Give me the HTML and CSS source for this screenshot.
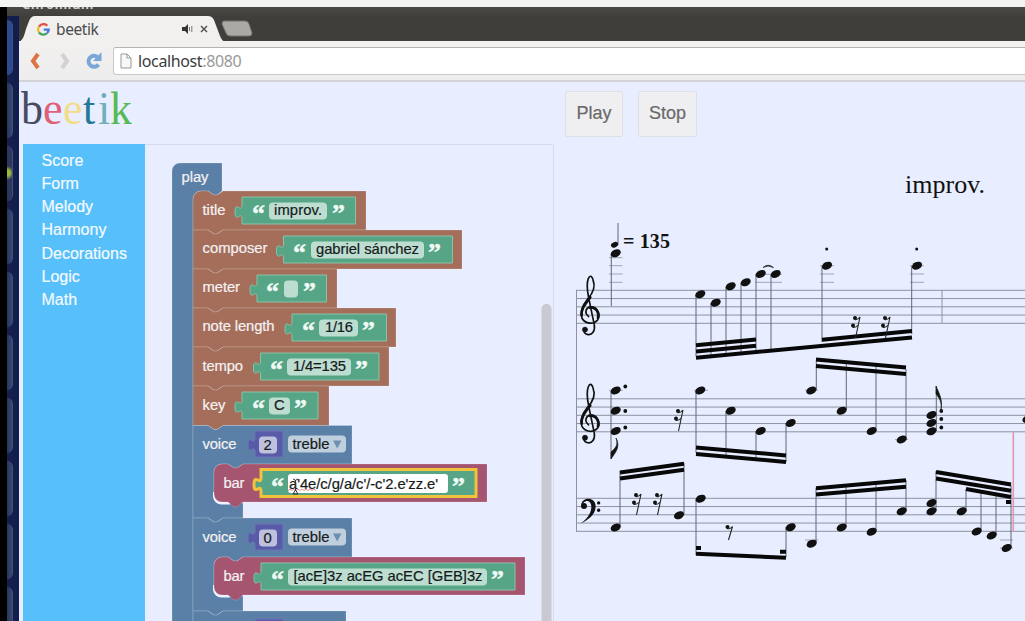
FILE: index.html
```html
<!DOCTYPE html>
<html lang="en">
<head>
<meta charset="utf-8">
<title>beetik</title>
<link rel="stylesheet" href="styles.css">
</head>
<body>
<div class="desktop">
  <div class="top-edge"></div>
  <div class="screen">
    <div class="bezel"></div>
    <div class="main">
      <div class="titlebar"><span class="window-title">Chromium</span></div>
      <div class="columns">
        <div class="launcher">
          <i class="tile first"></i><i class="tile"></i><i class="tile green"></i><i class="tile"></i><i class="tile"></i><i class="tile"></i><i class="tile"></i><i class="tile"></i><i class="tile"></i><i class="tile"></i>
        </div>
        <div class="browser">
          <div class="tabs">
            <div class="tab">
              <svg class="tab-shape" viewBox="0 0 206 26"><path d="M0 26C4 24 5 20 7 13L10 5Q12 0 16 0H189Q193 0 195 4L201 20Q203 25 206 26Z"/></svg>
              <svg class="google" viewBox="0 0 13 13"><g fill="none" stroke-width="2.3"><path stroke="#e25040" d="M2 3.7A5.2 5.2 0 0 1 10.3 2.8"/><path stroke="#f0bd35" d="M2 9.3A5.2 5.2 0 0 1 2 3.7"/><path stroke="#3fa45c" d="M10 10.2A5.2 5.2 0 0 1 2 9.3"/><path stroke="#4777dd" d="M6.7 6.6H11.7Q11.6 9 10 10.2"/></g></svg>
              <span class="tab-name">beetik</span>
              <svg class="speaker" viewBox="0 0 12 10"><path fill="#333" d="M0 3H3L6 0V10L3 7H0Z"/><path d="M7.5 3v4M9.8 2v6" stroke="#777" fill="none"/></svg>
              <svg class="close" viewBox="0 0 8 8"><path d="M1 1L7 7M7 1L1 7" stroke="#555" stroke-width="1.5"/></svg>
            </div>
            <svg class="newtab" viewBox="0 0 32 17"><path d="M3 1H24Q27 1 28 4L31 13Q31 16 28 16H9Q6 16 5 13L1 4Q1 1 3 1Z" fill="#aaa9a6" stroke="#77756f"/></svg>
          </div>
          <div class="toolbar">
            <svg class="nav back" viewBox="0 0 12 18"><path d="M9 2L4 9L9 16" fill="none" stroke="#dd7443" stroke-width="4"/></svg>
            <svg class="nav fwd" viewBox="0 0 12 18"><path d="M3 2L8 9L3 16" fill="none" stroke="#d3d2d0" stroke-width="4"/></svg>
            <svg class="nav reload" viewBox="0 0 18 18"><path d="M12.5 5A5.5 5.5 0 1 0 13.5 12.5" fill="none" stroke="#78a7d8" stroke-width="4"/><path d="M16.5 0V9H8Z" fill="#78a7d8"/></svg>
            <div class="address">
              <svg class="page-icon" viewBox="0 0 12 16"><path d="M1 1H7L11 5V15H1ZM7 1V5H11" fill="#f8f8f8" stroke="#999"/></svg>
              <span>localhost<em>:8080</em></span>
            </div>
          </div>
          <div class="content">
            <div class="editor">
              <div class="logo"><b class="l1">b</b><b class="l2">e</b><b class="l3">e</b><b class="l4">t</b><b class="l5">i</b><b class="l6">k</b></div>
              <div class="blockly">
                <ul class="toolbox"><li>Score</li><li>Form</li><li>Melody</li><li>Harmony</li><li>Decorations</li><li>Logic</li><li>Math</li></ul>
                <svg class="workspace" viewBox="145 144 409 477">
                  <path class="frame" d="M145 144.5H553.5V621"/>
                  <path class="scroll" d="M541.5 621V309a5 5 0 0 1 10 0V621Z"/>
                  <path class="blue edge" d="M172 622V171a8 8 0 0 1 8-8H222V191l-5 4h-3l-6-4H201a8 8 0 0 0-8 8V622Z"/>
                  <g class="brown edge">
                    <path d="M193 199a8 8 0 0 1 8-8h7l6 4h3l6-4H366V230H223l-6 4h-3l-6-4H193Z"/>
                    <path d="M193 230h15l6 4h3l6-4H462V269H223l-6 4h-3l-6-4H193Z"/>
                    <path d="M193 269h15l6 4h3l6-4H337V308H223l-6 4h-3l-6-4H193Z"/>
                    <path d="M193 308h15l6 4h3l6-4H396V347H223l-6 4h-3l-6-4H193Z"/>
                    <path d="M193 347h15l6 4h3l6-4H389V386H223l-6 4h-3l-6-4H193Z"/>
                    <path d="M193 386h15l6 4h3l6-4H329V425.500H223l-6 4h-3l-6-4H193Z"/>
                  </g>
                  <g class="blue edge">
                    <path d="M193 425.500h15l6 4h3l6-4H352V464H243l-6 4h-3l-6-4H222a8 8 0 0 0-8 8V495a8 8 0 0 0 8 8H243V518H223l-6 4h-3l-6-4H193Z"/>
                    <path d="M193 518h15l6 4h3l6-4H352V557H243l-6 4h-3l-6-4H222a8 8 0 0 0-8 8V588a8 8 0 0 0 8 8H243V611H223l-6 4h-3l-6-4H193Z"/>
                    <path d="M193 611h15l6 4h3l6-4H346V622H193Z"/>
                  </g>
                  <path class="corner" d="M214.500 492V497a7 7 0 0 0 7 6H230M214.500 585V590a7 7 0 0 0 7 6H230"/>
                  <g class="rose edge">
                    <path d="M214 472a8 8 0 0 1 8-8h6l6 4h3l6-4H487V502H243l-6 5h-3l-6-5h-6a8 8 0 0 1-8-8Z"/>
                    <path d="M214 565a8 8 0 0 1 8-8h6l6 4h3l6-4H525V595H243l-6 5h-3l-6-5h-6a8 8 0 0 1-8-8Z"/>
                  </g>
                  <g class="green">
                    <path d="M242 197H355.500V224H242v-5c0-9-7 5-7-7s7 2 7-7Z"/>
                    <path d="M283.500 236H452.500V263H283.500v-5c0-9-7 5-7-7s7 2 7-7Z"/>
                    <path d="M257 275H326.500V302H257v-5c0-9-7 5-7-7s7 2 7-7Z"/>
                    <path d="M292 314H386.500V341H292v-5c0-9-7 5-7-7s7 2 7-7Z"/>
                    <path d="M260.500 353H379V380H260.500v-5c0-9-7 5-7-7s7 2 7-7Z"/>
                    <path d="M242 392H318V419H242v-5c0-9-7 5-7-7s7 2 7-7Z"/>
                    <path class="selected" d="M261 469.500H476V496.500H261v-5c0-9-7 5-7-7s7 2 7-7Z"/>
                    <path d="M261 563H515V590H261v-5c0-9-7 5-7-7s7 2 7-7Z"/>
                  </g>
                  <g class="indigo">
                    <path d="M255 431H283V457H255v-5c0-9-7 5-7-7s7 2 7-7Z"/>
                    <path d="M255 524H283V550H255v-5c0-9-7 5-7-7s7 2 7-7Z"/>
                    <path d="M255 619H283V622H255Z"/>
                  </g>
                  <g class="field">
                    <rect x="269" y="202.500" width="58" height="17" rx="4"/>
                    <rect x="311" y="241.500" width="113" height="17" rx="4"/>
                    <rect x="284" y="280.500" width="14" height="17" rx="4"/>
                    <rect x="319" y="319.500" width="39" height="17" rx="4"/>
                    <rect x="287" y="358.500" width="64" height="17" rx="4"/>
                    <rect x="269" y="397.500" width="21" height="17" rx="4"/>
                    <rect class="active" x="288" y="474" width="160" height="19" rx="3"/>
                    <rect x="288" y="568.500" width="199" height="17" rx="4"/>
                    <rect x="259" y="436.500" width="18" height="17" rx="4"/>
                    <rect x="288" y="435.500" width="58" height="17" rx="4"/>
                    <rect x="259" y="529.500" width="18" height="17" rx="4"/>
                    <rect x="288" y="528.500" width="58" height="17" rx="4"/>
                  </g>
                  <g class="label">
                    <text x="181.500" y="182" textLength="27">play</text>
                    <text x="202.500" y="214.500" textLength="23">title</text>
                    <text x="202.500" y="253" textLength="65">composer</text>
                    <text x="202.500" y="292" textLength="37.500">meter</text>
                    <text x="202.500" y="331" textLength="72">note length</text>
                    <text x="202.500" y="370.500" textLength="40.500">tempo</text>
                    <text x="202.500" y="409.500" textLength="23">key</text>
                    <text x="202.500" y="448.500" textLength="34">voice</text>
                    <text x="223.500" y="487.500" textLength="21">bar</text>
                    <text x="202.500" y="541.500" textLength="34">voice</text>
                    <text x="223.500" y="580.500" textLength="21">bar</text>
                  </g>
                  <g class="value">
                    <text x="274" y="215" textLength="48">improv.</text>
                    <text x="316" y="254" textLength="103">gabriel sánchez</text>
                    <text x="325" y="332" textLength="28">1/16</text>
                    <text x="293" y="371" textLength="53">1/4=135</text>
                    <text x="274" y="410" textLength="11">C</text>
                    <text x="263.500" y="449.500">2</text>
                    <text x="292.500" y="448.500" textLength="37">treble</text>
                    <text x="289" y="488.500" textLength="149">a'4e/c/g/a/c'/-c'2.e'zz.e'</text>
                    <text x="263.500" y="542.500">0</text>
                    <text x="292.500" y="541.500" textLength="37">treble</text>
                    <text x="293.500" y="581" textLength="189">[acE]3z acEG acEC [GEB]3z</text>
                  </g>
                  <path class="arrow" d="M333 440.500H341.500L337.200 448.500ZM333 533.500H341.500L337.200 541.500Z"/>
                  <g class="quote">
                    <text x="252" y="222">“</text><text x="332" y="222">”</text>
                    <text x="293" y="261">“</text><text x="428" y="261">”</text>
                    <text x="266" y="300">“</text><text x="303" y="300">”</text>
                    <text x="302" y="339">“</text><text x="362" y="339">”</text>
                    <text x="270" y="378">“</text><text x="355" y="378">”</text>
                    <text x="252" y="417">“</text><text x="294" y="417">”</text>
                    <text x="271" y="494.500">“</text><text x="452" y="494.500">”</text>
                    <text x="271" y="587.500">“</text><text x="491" y="587.500">”</text>
                  </g>
                  <path d="M288 490.500l2-1.500 2 1.500 2-1.500 2 1.500 2-1.500 2 1.500 2-1.500 2 1.500 2-1.500 2 1.500 2-1.500 2 1.500 2-1.500 2 1.500" fill="none" stroke="#e58f92"/>
                  <path d="M293 479q2 0 2.500 2V490l-2.500 4h5l-2.500-4M298 479q-2 0-2.500 2" fill="none" stroke="#333"/>
                </svg>
              </div>
            </div>
            <div class="player">
              <div class="buttons"><button class="play">Play</button><button class="stop">Stop</button></div>
              <svg class="score" viewBox="560 150 465 471">
                <defs>
                  <ellipse id="n" rx="5.300" ry="3.700" transform="rotate(-25)"/>
                  <path id="staff" d="M576 0H1026M576 8.250H1026M576 16.500H1026M576 24.750H1026M576 33H1026"/>
                  <g id="treble" fill="none" stroke="#111" stroke-linecap="round">
                    <path stroke-width="5" d="M71 275C55 262 65 244 80 246C98 249 107 272 98 285C87 299 61 298 51 280C43 259 55 238 68 222C85 204 92 184 84 164C80 151 74 151 70 161C63 179 67 198 71 218L88 300C91 319 81 331 69 329C60 328 56 322 57 316"/>
                    <path stroke-width="8" d="M50 272C47 253 60 238 76 217M74 248C94 244 104 265 99 279"/>
                    <circle cx="60" cy="314" r="8" fill="#111"/>
                  </g>
                  <g id="rest"><circle cx="-2.500" cy="-9" r="2"/><circle cx="-4.500" cy="-1.500" r="2"/><path d="M-3-7.500Q0-6.500 2.500-10L-2 11M-5 .2Q-2 1 .7-2" fill="none" stroke="#222" stroke-width="1.100"/></g>
                </defs>
                <text class="song" x="905" y="193" textLength="80">improv.</text>
                <text class="bpm" x="623" y="248" textLength="47">= 135</text>
                <g class="lines"><use href="#staff" y="290.300"/><use href="#staff" y="398.800"/><use href="#staff" y="498.300"/>
                  <path d="M576.500 290V532M942 290V323"/>
                  <path class="ledger" d="M609 257.700h13.500M609 265.700h13.500M609 274h13.500M609 282.300h13.500M755 282.300h27M755 274.300h27M820 265.700h14M820 274h14M820 282.300h14M910 265.700h14M910 274h14M910 282.300h14M609 390.300h14M694 390.300h14M805 390.300h13M895 439.500h13M805 540h13M1000 540h13M1000 548h13"/>
                </g>
                <use href="#treble" transform="translate(565 225) scale(.333)"/>
                <use href="#treble" transform="translate(565 333.200) scale(.333)"/>
                <g transform="translate(565 455) scale(.333)"><circle cx="57" cy="153" r="9"/><path d="M49 151C49 125 91 124 92 153C93 178 70 195 47 206C66 191 80 176 79 153C78 139 66 132 55 144Z"/><circle cx="101" cy="144" r="5"/><circle cx="101" cy="166" r="5"/></g>
                <g class="stems"><path d="M618 223V245M611.300 255V306M696 295V356M711 303V356M726 287V353M741 283V352M756 275V351M771 275V350M822 266V342M911.700 266V334M611 391V459M696 391V453M726 411V458M756 431V461M786 423V462M816.300 390V361M846.300 410V363M876 431V366M906 439V369M936.300 431V386M620 527V471M684 515V463M696 499V555M786 527V557M816 543V488M846 527V486M876 531V483M906 511V480M936 511V471M966 511V489M981 531V491M996 535V495M1011 548V485"/></g>
                <g class="beams"><path d="M696 357.700L912 337.500M696 351.500L756 345.800M696 345.300L756 339.500M822 339.800L912 331M696 447.500L786 455.500M696 454L786 462M816 359.500L906 367.500M816 366L906 374M620 472.500L684 463.800M620 478.500L684 469.800M696 553.700L786 557.700M696 548h5M780 551.700h6M816 488.200L906 480.300M816 494.500L906 486.800M936 472L1011 484.500M936 478.500L1011 490.700M966 489L1011 497M1006 502h5"/></g>
                <g>
                  <use href="#n" transform="translate(614.500 244.800) scale(.7)"/>
                  <use href="#n" transform="translate(615.700 253.300)"/><use href="#n" transform="translate(700.300 294.300)"/><use href="#n" transform="translate(715.700 302.700)"/><use href="#n" transform="translate(730.700 286.300)"/><use href="#n" transform="translate(745.700 282.300)"/><use href="#n" transform="translate(760.700 274)"/><use href="#n" transform="translate(775.700 274)"/><use href="#n" transform="translate(827 265.700)"/><use href="#n" transform="translate(917 265.700)"/>
                  <use href="#n" transform="translate(615.700 390.500)"/><use href="#n" transform="translate(615.700 410.700)"/><use href="#n" transform="translate(615.700 431)"/><use href="#n" transform="translate(700.300 390.500)"/><use href="#n" transform="translate(730.700 410.700)"/><use href="#n" transform="translate(760.700 431)"/><use href="#n" transform="translate(790.700 423)"/><use href="#n" transform="translate(811.300 390.500)"/><use href="#n" transform="translate(841.700 410.700)"/><use href="#n" transform="translate(871.700 431)"/><use href="#n" transform="translate(901.700 439.500)"/><use href="#n" transform="translate(931.500 415)"/><use href="#n" transform="translate(931.500 423)"/><use href="#n" transform="translate(931.500 431.300)"/><use href="#n" transform="translate(1027.500 419)"/>
                  <use href="#n" transform="translate(615.700 527.500)"/><use href="#n" transform="translate(679 515.300)"/><use href="#n" transform="translate(700.700 498.700)"/><use href="#n" transform="translate(790.700 527.300)"/><use href="#n" transform="translate(811.700 543.700)"/><use href="#n" transform="translate(841.700 527.500)"/><use href="#n" transform="translate(871.700 531.700)"/><use href="#n" transform="translate(901.700 511.300)"/><use href="#n" transform="translate(931.500 503)"/><use href="#n" transform="translate(931.500 511.300)"/><use href="#n" transform="translate(961.700 511.300)"/><use href="#n" transform="translate(976.700 531.500)"/><use href="#n" transform="translate(991.700 535.500)"/><use href="#n" transform="translate(1006.700 548)"/>
                </g>
                <use href="#rest" x="857.500" y="327"/><use href="#rest" x="887.500" y="327"/><use href="#rest" x="680.500" y="420"/><use href="#rest" x="638.500" y="504"/><use href="#rest" x="659.500" y="504"/>
                <g transform="translate(730.500 533)"><circle cx="-3" cy="-6" r="2"/><path d="M-3-4Q0-4 2-6.500L-2 7" fill="none" stroke="#222" stroke-width="1.100"/></g>
                <g><circle cx="826.700" cy="249" r="1.500"/><circle cx="916.700" cy="249" r="1.500"/><circle cx="625.300" cy="386.500" r="1.900"/><circle cx="625.300" cy="411" r="1.900"/><circle cx="625.300" cy="427.500" r="1.900"/><circle cx="941.300" cy="411" r="1.900"/><circle cx="941.300" cy="419" r="1.900"/><circle cx="941.300" cy="427.500" r="1.900"/></g>
                <path d="M763 267.500Q768 263 773.500 267.500Q768 264.500 763 267.500M611 459V452C614 449 619 446 616 438C621 447 615 453 611 459M936 386V394C939 398 942 401 941 410C943 400 939 393 936 386" stroke="#222" stroke-width=".7"/>
                <path d="M1013.300 432V532" stroke="#e397b3" stroke-width="1.600"/>
              </svg>
            </div>
          </div>
        </div>
      </div>
    </div>
  </div>
</div>
</body>
</html>
```
FILE: styles.css
```css
* { box-sizing: border-box; }
body { margin: 0; font-family: "Liberation Sans", Arial, sans-serif; }
svg { display: block; flex: none; }
.desktop { width: 1025px; height: 621px; overflow: hidden; display: flex; flex-direction: column; background: #3f3e3a; }
.top-edge { height: 7px; background: #f4f4f3; flex: none; }
.screen { display: flex; flex: 1; min-height: 0; }
.bezel { width: 7px; background: #000; flex: none; }
.main { flex: 1; min-width: 0; display: flex; flex-direction: column; }
.titlebar { height: 9px; overflow: hidden; flex: none; padding-left: 15px; background: linear-gradient(#4b4a46, #403f3b); }
.window-title { display: block; margin-top: -11px; font: bold 13px/16px "Open Sans", sans-serif; color: #d0cec8; letter-spacing: .4px; }
.columns { display: flex; flex: 1; min-height: 0; }
.launcher { width: 12px; background: linear-gradient(90deg, #152149, #101d50); flex: none; display: flex; flex-direction: column; gap: 8px; }
.tile { height: 55px; width: 6px; flex: none; background: linear-gradient(90deg, #26375e, #39486f); border-radius: 0 6px 6px 0; border-right: 1px solid #435078; }
.tile.first { margin-top: 4px; background: #2b4a91; }
.tile.green { background: radial-gradient(circle at 0 27px, #9cba3f 3px, #2a385e 7px); }
.browser { flex: 1; min-width: 0; display: flex; flex-direction: column; }
.tabs { display: flex; height: 25px; flex: none; background: #3f3e3a; gap: 0; }
.tab { display: grid; grid-template-columns: 18px 13px 5px 127px 12px 6px 8px 17px; width: 206px; height: 25px; align-items: center; }
.tab > * { grid-row: 1; }
.tab-shape { grid-column: 1 / -1; width: 206px; height: 26px; fill: #f1f0ef; align-self: start; }
.google { grid-column: 2; width: 13px; height: 13px; }
.tab-name { grid-column: 4; padding-left: 1px; font: 15.500px/24px "Noto Sans", sans-serif; letter-spacing: -.4px; color: #4b4b4b; }
.speaker { grid-column: 5; width: 12px; height: 10px; }
.close { grid-column: 7; width: 8px; height: 8px; }
.newtab { width: 32px; height: 17px; margin: 4px 0 0 -4px; }
.toolbar { height: 41px; flex: none; background: linear-gradient(#f2f1f0, #eeeded); border-bottom: 2px solid #d2d1d5; display: flex; align-items: center; }
.nav { width: 12px; height: 18px; }
.back { margin-left: 10px; }
.fwd { margin-left: 18px; }
.reload { width: 18px; margin-left: 14px; }
.address { flex: 1; height: 28px; margin-left: 10px; padding-left: 6px; background: #fff; border: 1px solid #cac9c7; border-top-color: #b5b4b2; border-right: 0; border-radius: 3px 0 0 3px; display: flex; align-items: center; gap: 6px; font: 16px/24px "Noto Sans", sans-serif; letter-spacing: -.37px; color: #3c3c3c; }
.address em { font-style: normal; color: #999; }
.page-icon { width: 12px; height: 16px; }
.content { flex: 1; min-height: 0; display: flex; background: #e8eeff; padding-left: 2px; }
.editor { width: 539px; flex: none; display: flex; flex-direction: column; }
.logo { height: 62px; flex: none; display: flex; padding-top: 3px; font: 44px/50px "Liberation Serif", serif; }
.logo b { font-weight: normal; flex: none; transform-origin: left 39px; transform: scaleY(1.06); }
.l1 { width: 22px; color: #4b4b60; }
.l2 { width: 20px; color: #df6077; }
.l3 { width: 20px; color: #f3dc8b; }
.l4 { width: 15px; color: #237895; }
.l5 { width: 12px; color: #6faeba; }
.l6 { width: 20px; color: #55b955; }
.blockly { display: flex; padding-left: 2px; height: 477px; }
.toolbox { list-style: none; margin: 0; padding: 5px 0 0 18.500px; width: 122px; background: #57bffa; color: #f4faff; font-size: 16px; line-height: 23.150px; -webkit-text-stroke: .2px #f4faff; }
.workspace { width: 409px; height: 477px; }
.frame { fill: none; stroke: #d5dcee; }
.scroll { fill: #cac8d1; }
.blue { fill: #5b80a7; }
.brown { fill: #a56e5b; }
.rose { fill: #a5556f; }
.edge { stroke: #fff; stroke-opacity: .22; stroke-width: .8; }
.green { fill: #56a586; stroke: #8bc2a7; stroke-width: 1; }
.green .selected { stroke: #f0c33b; stroke-width: 3; }
.indigo { fill: #575ba8; stroke: #6e75b7; }
.corner { fill: none; stroke: #eef2ff; stroke-width: 3; }
.field { fill: #fff; fill-opacity: .62; }
.field .active { fill-opacity: 1; }
.label { fill: #f5f2f3; stroke: #f5f2f3; stroke-width: .2; font-size: 14.800px; }
.value { fill: #151b1b; stroke: #151b1b; stroke-width: .2; font-size: 14.800px; }
.arrow { fill: #6f91b1; }
.quote { fill: #f0faf5; stroke: #f0faf5; stroke-width: .4; font: bold 26px "Liberation Serif", serif; }
.player { flex: 1; min-width: 0; }
.buttons { display: flex; height: 68px; gap: 15px; padding: 9px 0 0 5px; }
.buttons button { height: 46px; border: 1px solid #dedfe7; border-radius: 2px; background: #efeef0; color: #696969; font: 18px "Liberation Sans", sans-serif; -webkit-text-stroke: .2px #696969; padding: 0 0 2px; }
.play { width: 58px; }
.stop { width: 59px; }
.score { width: 465px; height: 471px; fill: #111; }
.song { font: 26px "Liberation Serif", serif; }
.bpm { font: bold 20px "Liberation Serif", serif; }
.lines { stroke: #8c92a1; stroke-width: 1; fill: none; }
.ledger { stroke: #a1a6b4; }
.stems { stroke: #626776; stroke-width: 1; }
.beams { stroke: #080808; stroke-width: 4; }
```
